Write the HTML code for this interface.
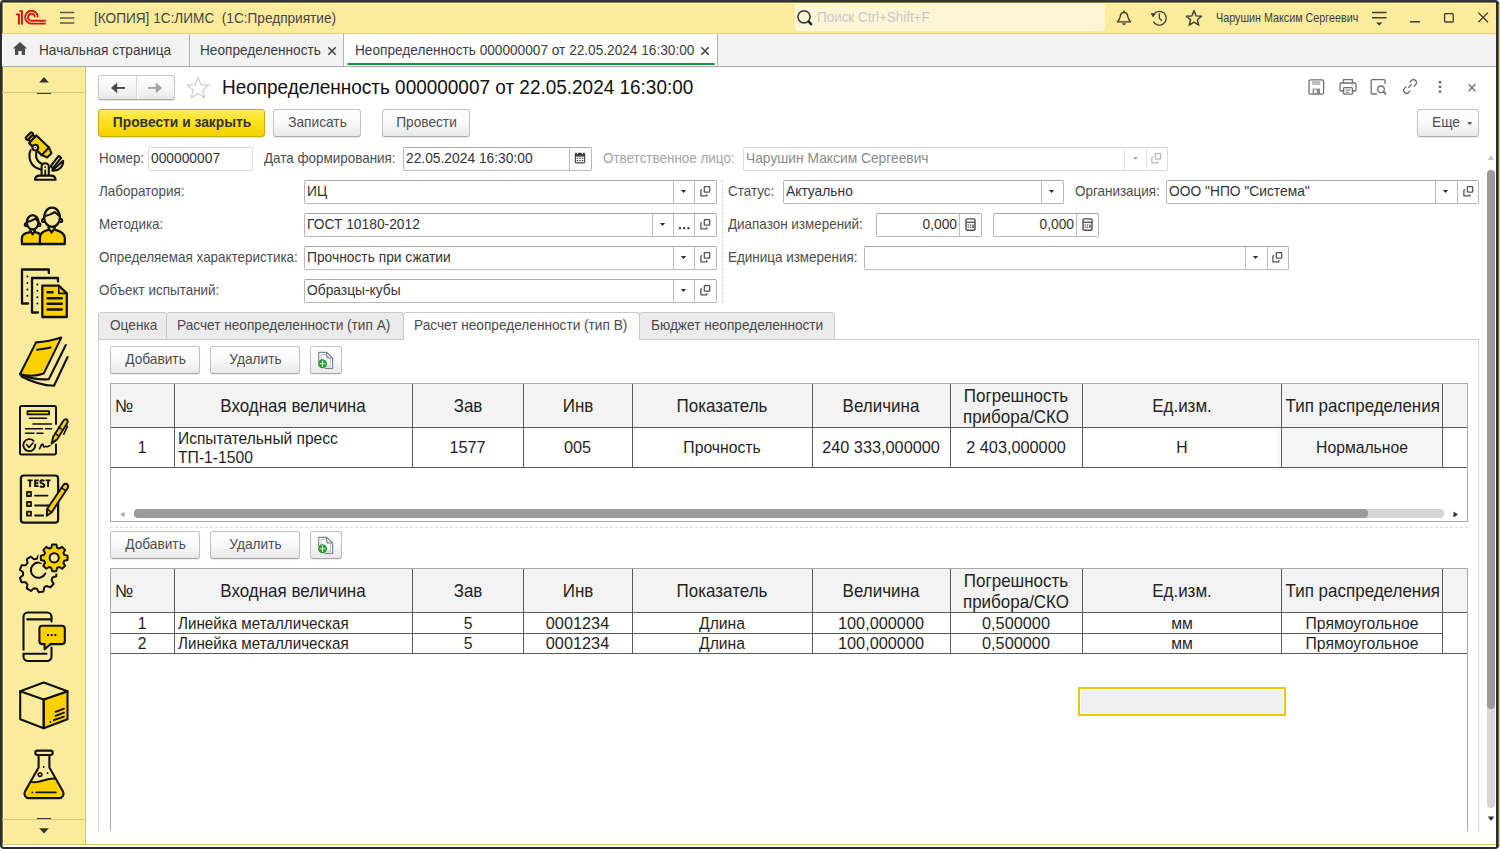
<!DOCTYPE html>
<html><head><meta charset="utf-8">
<style>
*{box-sizing:border-box;margin:0;padding:0}
html,body{width:1500px;height:849px;overflow:hidden;background:#fff;font-family:"Liberation Sans",sans-serif;color:#333}
.a{position:absolute;white-space:nowrap;line-height:normal}
svg{display:block}
</style></head><body>
<div class="a" style="left:0px;top:0px;width:1499px;height:849px;background:#2d2c2c;border-radius:4px"></div>
<div class="a" style="left:1498px;top:4px;width:1px;height:841px;background:#7a7146"></div>
<div class="a" style="left:1499px;top:3px;width:1px;height:843px;background:#DCCB7C"></div>
<div class="a" style="left:2px;top:2px;width:1494px;height:845px;background:#fff"></div>
<div class="a" style="left:2px;top:2px;width:1494px;height:31px;background:#FBEB9C"></div>
<div class="a" style="left:2px;top:0px;width:1494px;height:1px;background:#3c3a37"></div>
<div class="a" style="left:2px;top:2px;width:1494px;height:1px;background:#8a8062"></div>
<div class="a" style="left:3px;top:3px;width:1493px;height:1px;background:#FFFCA2"></div>
<div class="a" style="left:3px;top:4px;width:1493px;height:1px;background:#F8E897"></div>
<div class="a" style="left:2px;top:2px;width:1px;height:32px;background:#8a8062"></div>
<div class="a" style="left:3px;top:3px;width:1px;height:31px;background:#FFFCA2"></div>
<div class="a" style="left:2px;top:33px;width:1494px;height:1px;background:#E2D07A"></div>
<div class="a" style="left:2px;top:34px;width:1494px;height:32px;background:#F2F2F2"></div>
<div class="a" style="left:2px;top:66px;width:1494px;height:1px;background:#A9ABB2"></div>
<div class="a" style="left:2px;top:34px;width:1px;height:32px;background:#ffffff"></div>
<div class="a" style="left:2px;top:67px;width:83px;height:778px;background:#FBEB9C"></div>
<div class="a" style="left:85px;top:67px;width:1px;height:778px;background:#D3C06A"></div>
<div class="a" style="left:84px;top:67px;width:1px;height:778px;background:#FDF3A6"></div>
<div class="a" style="left:3px;top:67px;width:1px;height:778px;background:#FFFBA8"></div>
<div class="a" style="left:2px;top:67px;width:1px;height:780px;background:#6f6a52"></div>
<div class="a" style="left:2px;top:844px;width:1494px;height:1px;background:#D8C56C"></div>
<div class="a" style="left:2px;top:92px;width:83px;height:1px;background:#D8C56C"></div>
<div class="a" style="left:2px;top:819px;width:83px;height:1px;background:#D8C56C"></div>
<svg class="a" style="left:0;top:0" width="60" height="33" viewBox="0 0 60 33"><g fill="#D7141D"><path d="M15.9 13.6H19.9V24.6H17.9V15.3H15.9Z"/><path d="M19.3 10.3H22.9V24.6H20.9V12H19.3Z"/></g><g fill="none" stroke="#D7141D" stroke-width="1.9"><path d="M37.9 17.2A6.4 6.4 0 1 0 31.5 23.6H45.8"/><path d="M35.0 17.2A3.5 3.5 0 1 0 31.5 20.7H45.8"/></g></svg>
<svg class="a" style="left:58px;top:10px" width="20" height="16"><g stroke="#5E5944" stroke-width="1.6"><path d="M2 2.5H16.3M2 8H16.3M2 13H16.3"/></g></svg>
<div class="a" style="left:94px;top:10px;font-size:14.2px;color:#454545;font-weight:400;transform:scaleX(0.96);transform-origin:0 0;">[КОПИЯ] 1С:ЛИМС&nbsp;&nbsp;(1С:Предприятие)</div>
<div class="a" style="left:795px;top:4px;width:310px;height:27px;background:#FCF5D6;border-radius:3px"></div>
<svg class="a" style="left:795px;top:8px" width="20" height="20"><circle cx="9" cy="8.8" r="6.1" fill="none" stroke="#3a3a3a" stroke-width="1.6"/><path d="M13.3 13.2L16.8 16.8" stroke="#222" stroke-width="2.4"/></svg>
<div class="a" style="left:817px;top:9px;font-size:14px;color:#C9C8C8;font-weight:400;transform:scaleX(0.96);transform-origin:0 0;">Поиск Ctrl+Shift+F</div>
<svg class="a" style="left:1114px;top:8px" width="20" height="20" viewBox="0 0 20 20"><path d="M3.4 13.8C4.9 12.4 5.9 10.6 6.3 8.1C6.7 5.4 7.9 4.5 10 4.5C12.1 4.5 13.3 5.4 13.7 8.1C14.1 10.6 15.1 12.4 16.6 13.8Z" fill="none" stroke="#3f3c33" stroke-width="1.3" stroke-linejoin="round"/><path d="M10 2.4V4.5" stroke="#3f3c33" stroke-width="1.4"/><path d="M8.1 15.2A1.9 1.7 0 0 0 11.9 15.2Z" fill="#3f3c33"/></svg>
<svg class="a" style="left:1149px;top:8px" width="20" height="20" viewBox="0 0 20 20"><path d="M4.8 6.2A6.9 6.9 0 1 1 4.3 13.6" fill="none" stroke="#3f3c33" stroke-width="1.3"/><path d="M1.6 5.1L6.9 5.5L3.9 9.6Z" fill="#3f3c33"/><path d="M10.3 5.2V10.2L13 12.8" fill="none" stroke="#3f3c33" stroke-width="1.3"/></svg>
<svg class="a" style="left:1184px;top:8px" width="20" height="20" viewBox="0 0 20 20"><path d="M10 2.6L12.1 7.9L17.6 8.3L13.4 11.8L14.8 17.2L10 14.2L5.2 17.2L6.6 11.8L2.4 8.3L7.9 7.9Z" fill="none" stroke="#3f3c33" stroke-width="1.4" stroke-linejoin="round"/></svg>
<div class="a" style="left:1216px;top:11px;font-size:12.5px;color:#3d3d3d;font-weight:400;transform:scaleX(0.86);transform-origin:0 0;">Чарушин Максим Сергеевич</div>
<svg class="a" style="left:1370px;top:10px" width="20" height="18"><path d="M2 2.5H16.5M2 7.7H16.5" stroke="#3f3c33" stroke-width="1.4"/><path d="M6 12.5H12.5L9.25 15.5Z" fill="#3f3c33"/></svg>
<div class="a" style="left:1410px;top:21px;width:10px;height:1px;background:#3f3c33"></div>
<div class="a" style="left:1410px;top:22px;width:10px;height:1px;background:#9a9270"></div>
<svg class="a" style="left:1440px;top:9px" width="18" height="18"><rect x="4.6" y="4.6" width="8.6" height="8.4" rx="0.8" fill="none" stroke="#3f3c33" stroke-width="1.3"/></svg>
<svg class="a" style="left:1474px;top:8px" width="18" height="18"><path d="M4.3 4.6L14 14.2M14 4.6L4.3 14.2" stroke="#3f3c33" stroke-width="1.3"/></svg>
<svg class="a" style="left:12px;top:41px" width="16" height="15" viewBox="0 0 16 15"><path d="M8 1L15.2 7.6H13V14H9.7V10H6.3V14H3V7.6H0.8Z" fill="#4a4a4a"/></svg>
<div class="a" style="left:39px;top:42px;font-size:14.3px;color:#3c3c3c;font-weight:400;transform:scaleX(0.955);transform-origin:0 0;">Начальная страница</div>
<div class="a" style="left:189px;top:34px;width:1px;height:32px;background:#B2B2B2"></div>
<div class="a" style="left:200px;top:42px;font-size:14.3px;color:#3c3c3c;font-weight:400;transform:scaleX(0.955);transform-origin:0 0;">Неопределенность</div>
<svg class="a" style="left:326px;top:45px" width="12" height="12"><path d="M2.3 2.3L9.7 9.7M9.7 2.3L2.3 9.7" stroke="#444" stroke-width="1.6"/></svg>
<div class="a" style="left:343px;top:34px;width:1px;height:32px;background:#B2B2B2"></div>
<div class="a" style="left:344px;top:34px;width:373px;height:32px;background:#fff"></div>
<div class="a" style="left:717px;top:34px;width:1px;height:32px;background:#B2B2B2"></div>
<div class="a" style="left:347px;top:63px;width:368px;height:2px;background:#14953F;border-radius:1px"></div>
<div class="a" style="left:355px;top:42px;font-size:14.3px;color:#3c3c3c;font-weight:400;transform:scaleX(0.955);transform-origin:0 0;">Неопределенность 000000007 от 22.05.2024 16:30:00</div>
<svg class="a" style="left:699px;top:45px" width="12" height="12"><path d="M2.3 2.3L9.7 9.7M9.7 2.3L2.3 9.7" stroke="#444" stroke-width="1.6"/></svg>
<svg class="a" style="left:38px;top:76px" width="12" height="8"><path d="M1.2 6.5L6 1L10.8 6.5Z" fill="#333"/></svg>
<div class="a" style="left:37px;top:93px;width:14px;height:1px;background:#3a3a3a"></div>
<div class="a" style="left:37px;top:818px;width:14px;height:1px;background:#3a3a3a"></div>
<svg class="a" style="left:38px;top:827px" width="12" height="8"><path d="M1.2 1.2L6 6.5L10.8 1.2Z" fill="#333"/></svg>
<div class="a" style="left:98px;top:75px;width:77px;height:25px;border:1px solid #c6c6c6;border-bottom-color:#aaa;border-radius:3px;background:linear-gradient(#fff,#f6f6f6 50%,#e9e9e9);box-shadow:0 1px 1px rgba(0,0,0,.1)"></div>
<div class="a" style="left:136px;top:76px;width:1px;height:23px;background:#d6d6d6"></div>
<div class="a" style="left:137px;top:76px;width:1px;height:23px;background:#fafafa"></div>
<svg class="a" style="left:109px;top:81px" width="18" height="14"><path d="M2 6.9L8.2 1.6V12.2Z" fill="#4a4a4a"/><path d="M7 6H16V7.9H7Z" fill="#4a4a4a"/></svg>
<svg class="a" style="left:146px;top:81px" width="18" height="14"><path d="M16 6.9L9.8 1.6V12.2Z" fill="#a3a3a3"/><path d="M2 6H11V7.9H2Z" fill="#a3a3a3"/></svg>
<svg class="a" style="left:184px;top:75px" width="28" height="26" viewBox="0 0 28 26"><path d="M14 2.2L16.9 9.7L24.9 10.1L18.7 15.2L20.8 23L14 18.6L7.2 23L9.3 15.2L3.1 10.1L11.1 9.7Z" fill="none" stroke="#c7cdd4" stroke-width="1.2" stroke-linejoin="round"/></svg>
<div class="a" style="left:222px;top:76px;font-size:20px;color:#111;font-weight:400;transform:scaleX(0.948);transform-origin:0 0;">Неопределенность 000000007 от 22.05.2024 16:30:00</div>
<svg class="a" style="left:1306px;top:77px" width="20" height="20" viewBox="0 0 20 20"><rect x="3" y="2.8" width="14.6" height="14.4" rx="1.6" fill="none" stroke="#6f6f6f" stroke-width="1.3"/><rect x="6.2" y="3" width="8" height="5" fill="#bdbdbd"/><rect x="6.6" y="11.6" width="7.4" height="5.4" fill="#8a8a8a"/><rect x="8.2" y="12.6" width="2.4" height="3.6" fill="#fff"/></svg>
<svg class="a" style="left:1338px;top:77px" width="20" height="20" viewBox="0 0 20 20"><path d="M5.5 6V2.6H14.5V6" fill="none" stroke="#6f6f6f" stroke-width="1.3"/><path d="M5 14H3.2A1.2 1.2 0 0 1 2 12.8V7.2A1.2 1.2 0 0 1 3.2 6H16.8A1.2 1.2 0 0 1 18 7.2V12.8A1.2 1.2 0 0 1 16.8 14H15" fill="none" stroke="#6f6f6f" stroke-width="1.3"/><rect x="5.6" y="10.6" width="8.8" height="6.6" rx="0.8" fill="#fff" stroke="#6f6f6f" stroke-width="1.3"/><path d="M7.5 13H12.5M7.5 15.2H11" stroke="#6f6f6f" stroke-width="1"/><path d="M13.5 8.2H15.8" stroke="#aaa" stroke-width="1"/></svg>
<svg class="a" style="left:1369px;top:77px" width="20" height="20" viewBox="0 0 20 20"><path d="M8 17H3.2A1 1 0 0 1 2.2 16V3.6A1 1 0 0 1 3.2 2.6H15A1 1 0 0 1 16 3.6V7" fill="none" stroke="#6f6f6f" stroke-width="1.3"/><circle cx="12" cy="12.3" r="3.3" fill="none" stroke="#6f6f6f" stroke-width="1.3"/><path d="M14.4 14.7L17 17.3" stroke="#6f6f6f" stroke-width="1.8"/></svg>
<svg class="a" style="left:1400px;top:77px" width="20" height="20" viewBox="0 0 20 20"><path d="M8.3 10.7L11.7 7.3" stroke="#6f6f6f" stroke-width="1.3"/><path d="M9.6 5.4L11.5 3.5A2.9 2.9 0 0 1 15.6 7.6L13.7 9.5" fill="none" stroke="#6f6f6f" stroke-width="1.3"/><path d="M10.4 13.6L8.5 15.5A2.9 2.9 0 0 1 4.4 11.4L6.3 9.5" fill="none" stroke="#6f6f6f" stroke-width="1.3"/></svg>
<svg class="a" style="left:1436px;top:78px" width="8" height="18"><circle cx="4" cy="4.2" r="1.4" fill="#6f6f6f"/><circle cx="4" cy="8.9" r="1.4" fill="#6f6f6f"/><circle cx="4" cy="13.6" r="1.4" fill="#6f6f6f"/></svg>
<svg class="a" style="left:1466px;top:82px" width="12" height="12"><path d="M2.6 2.2L9.4 9.2M9.4 2.2L2.6 9.2" stroke="#6f6f6f" stroke-width="1.3"/></svg>
<div class="a" style="left:98px;top:109px;width:167px;height:28px;border:1px solid #C8AB14;border-radius:3px;background:linear-gradient(#FFEC5C 0%,#FFE11F 45%,#F4D200 100%);box-shadow:0 1px 1px rgba(0,0,0,.12)"></div>
<div class="a" style="left:101.5px;width:160px;text-align:center;top:114px;font-size:14.3px;color:#333;font-weight:700;transform:scaleX(0.965);transform-origin:50% 0;">Провести и закрыть</div>
<div class="a" style="left:273px;top:109px;width:88px;height:28px;border:1px solid #c3c3c3;border-bottom-color:#aaa;border-radius:3px;background:linear-gradient(#fff 0%,#f9f9f9 50%,#e8e8e8 100%);box-shadow:0 1px 1px rgba(0,0,0,.08);"></div>
<div class="a" style="left:273.5px;width:87px;text-align:center;top:114px;font-size:14.5px;color:#4d4d4d;font-weight:400;transform:scaleX(0.945);transform-origin:50% 0;">Записать</div>
<div class="a" style="left:382px;top:109px;width:88px;height:28px;border:1px solid #c3c3c3;border-bottom-color:#aaa;border-radius:3px;background:linear-gradient(#fff 0%,#f9f9f9 50%,#e8e8e8 100%);box-shadow:0 1px 1px rgba(0,0,0,.08);"></div>
<div class="a" style="left:382.5px;width:87px;text-align:center;top:114px;font-size:14.5px;color:#4d4d4d;font-weight:400;transform:scaleX(0.945);transform-origin:50% 0;">Провести</div>
<div class="a" style="left:1417px;top:109px;width:62px;height:28px;border:1px solid #c3c3c3;border-bottom-color:#aaa;border-radius:3px;background:linear-gradient(#fff 0%,#f9f9f9 50%,#e8e8e8 100%);box-shadow:0 1px 1px rgba(0,0,0,.08);"></div>
<div class="a" style="left:1432px;top:114px;font-size:14.5px;color:#4d4d4d;font-weight:400;transform:scaleX(0.945);transform-origin:0 0;">Еще</div>
<svg class="a" style="left:1467px;top:122px" width="6" height="4"><path d="M0.2 0.3H5.2L2.7 2.8Z" fill="#333"/></svg>
<div class="a" style="left:99px;top:150px;font-size:14.3px;color:#4d4d4d;font-weight:400;transform:scaleX(0.94);transform-origin:0 0;">Номер:</div>
<div class="a" style="left:148px;top:147px;width:105px;height:24px;border:1px solid #dadada;border-top-color:#d5d5d5;border-radius:2px;background:#fff"></div>
<div class="a" style="left:151px;top:150px;font-size:14.3px;color:#333;font-weight:400;transform:scaleX(0.965);transform-origin:0 0;">000000007</div>
<div class="a" style="left:264px;top:150px;font-size:14.3px;color:#4d4d4d;font-weight:400;transform:scaleX(0.94);transform-origin:0 0;">Дата формирования:</div>
<div class="a" style="left:403px;top:147px;width:189px;height:24px;border:1px solid #b8b8b8;border-top-color:#a8a8a8;border-radius:2px;background:#fff"></div>
<div class="a" style="left:569px;top:148px;width:1px;height:22px;background:#bdbdbd"></div>
<div class="a" style="left:406px;top:150px;font-size:14.3px;color:#333;font-weight:400;transform:scaleX(0.965);transform-origin:0 0;">22.05.2024 16:30:00</div>
<svg width="12" height="13" style="position:absolute;left:574px;top:151px" viewBox="0 0 12 13"><path d="M0.8 3.2A1.4 1.4 0 0 1 2.2 1.8H9.8A1.4 1.4 0 0 1 11.2 3.2V11A1.4 1.4 0 0 1 9.8 12.4H2.2A1.4 1.4 0 0 1 0.8 11Z" fill="#3d3d3d"/><rect x="1.9" y="5.6" width="8.2" height="5.7" fill="#fff"/><g fill="#3d3d3d"><circle cx="3.4" cy="7.2" r="0.8"/><circle cx="6" cy="7.2" r="0.8"/><circle cx="8.6" cy="7.2" r="0.8"/><circle cx="3.4" cy="9.6" r="0.8"/><circle cx="6" cy="9.6" r="0.8"/><circle cx="8.6" cy="9.6" r="0.8"/></g><rect x="2.9" y="0.6" width="1.1" height="2.6" fill="#fff"/><rect x="7.9" y="0.6" width="1.1" height="2.6" fill="#fff"/></svg>
<div class="a" style="left:603px;top:150px;font-size:14.3px;color:#a4a4a4;font-weight:400;transform:scaleX(0.94);transform-origin:0 0;">Ответственное лицо:</div>
<div class="a" style="left:743px;top:147px;width:425px;height:24px;border:1px solid #dadada;border-top-color:#d5d5d5;border-radius:2px;background:#fff"></div>
<div class="a" style="left:1124px;top:148px;width:1px;height:22px;background:#e3e3e3"></div>
<div class="a" style="left:1146px;top:148px;width:1px;height:22px;background:#e3e3e3"></div>
<div class="a" style="left:746px;top:150px;font-size:14.3px;color:#8a8a8a;font-weight:400;transform:scaleX(0.965);transform-origin:0 0;">Чарушин Максим Сергеевич</div>
<svg width="7" height="5" style="position:absolute;left:1132px;top:156px"><path d="M0.8 1H6.2L3.5 4.1z" fill="#b5b5b5"/></svg>
<svg width="13" height="13" style="position:absolute;left:1150px;top:152px" viewBox="0 0 13 13"><path d="M2.6 4.6L1.9 5.3V10.9H7.8V9.6" fill="none" stroke="#b8b8b8" stroke-width="1.3" stroke-linecap="round" stroke-linejoin="round"/><rect x="5.3" y="1.7" width="5.4" height="5.5" rx="0.6" fill="none" stroke="#b8b8b8" stroke-width="1.3"/></svg>
<div class="a" style="left:99px;top:183px;font-size:14.3px;color:#4d4d4d;font-weight:400;transform:scaleX(0.94);transform-origin:0 0;">Лаборатория:</div>
<div class="a" style="left:304px;top:180px;width:413px;height:24px;border:1px solid #b8b8b8;border-top-color:#a8a8a8;border-radius:2px;background:#fff"></div>
<div class="a" style="left:673px;top:181px;width:1px;height:22px;background:#bdbdbd"></div>
<div class="a" style="left:694px;top:181px;width:1px;height:22px;background:#bdbdbd"></div>
<div class="a" style="left:307px;top:183px;font-size:14.3px;color:#333;font-weight:400;transform:scaleX(0.965);transform-origin:0 0;">ИЦ</div>
<svg width="7" height="5" style="position:absolute;left:680px;top:189px"><path d="M0.8 1H6.2L3.5 4.1z" fill="#333"/></svg>
<svg width="13" height="13" style="position:absolute;left:699px;top:185px" viewBox="0 0 13 13"><path d="M2.6 4.6L1.9 5.3V10.9H7.8V9.6" fill="none" stroke="#555" stroke-width="1.3" stroke-linecap="round" stroke-linejoin="round"/><rect x="5.3" y="1.7" width="5.4" height="5.5" rx="0.6" fill="none" stroke="#555" stroke-width="1.3"/></svg>
<div class="a" style="left:99px;top:216px;font-size:14.3px;color:#4d4d4d;font-weight:400;transform:scaleX(0.94);transform-origin:0 0;">Методика:</div>
<div class="a" style="left:304px;top:213px;width:413px;height:24px;border:1px solid #b8b8b8;border-top-color:#a8a8a8;border-radius:2px;background:#fff"></div>
<div class="a" style="left:652px;top:214px;width:1px;height:22px;background:#bdbdbd"></div>
<div class="a" style="left:673px;top:214px;width:1px;height:22px;background:#bdbdbd"></div>
<div class="a" style="left:694px;top:214px;width:1px;height:22px;background:#bdbdbd"></div>
<div class="a" style="left:307px;top:216px;font-size:14.3px;color:#333;font-weight:400;transform:scaleX(0.965);transform-origin:0 0;">ГОСТ 10180-2012</div>
<svg width="7" height="5" style="position:absolute;left:659px;top:222px"><path d="M0.8 1H6.2L3.5 4.1z" fill="#333"/></svg>
<svg width="12" height="3" style="position:absolute;left:678px;top:227px"><g fill="#222"><rect x="1" y="0.2" width="2" height="2"/><rect x="5.2" y="0.2" width="2" height="2"/><rect x="9.4" y="0.2" width="2" height="2"/></g></svg>
<svg width="13" height="13" style="position:absolute;left:699px;top:218px" viewBox="0 0 13 13"><path d="M2.6 4.6L1.9 5.3V10.9H7.8V9.6" fill="none" stroke="#555" stroke-width="1.3" stroke-linecap="round" stroke-linejoin="round"/><rect x="5.3" y="1.7" width="5.4" height="5.5" rx="0.6" fill="none" stroke="#555" stroke-width="1.3"/></svg>
<div class="a" style="left:99px;top:249px;font-size:14.3px;color:#4d4d4d;font-weight:400;transform:scaleX(0.94);transform-origin:0 0;">Определяемая характеристика:</div>
<div class="a" style="left:304px;top:246px;width:413px;height:24px;border:1px solid #b8b8b8;border-top-color:#a8a8a8;border-radius:2px;background:#fff"></div>
<div class="a" style="left:673px;top:247px;width:1px;height:22px;background:#bdbdbd"></div>
<div class="a" style="left:694px;top:247px;width:1px;height:22px;background:#bdbdbd"></div>
<div class="a" style="left:307px;top:249px;font-size:14.3px;color:#333;font-weight:400;transform:scaleX(0.965);transform-origin:0 0;">Прочность при сжатии</div>
<svg width="7" height="5" style="position:absolute;left:680px;top:255px"><path d="M0.8 1H6.2L3.5 4.1z" fill="#333"/></svg>
<svg width="13" height="13" style="position:absolute;left:699px;top:251px" viewBox="0 0 13 13"><path d="M2.6 4.6L1.9 5.3V10.9H7.8V9.6" fill="none" stroke="#555" stroke-width="1.3" stroke-linecap="round" stroke-linejoin="round"/><rect x="5.3" y="1.7" width="5.4" height="5.5" rx="0.6" fill="none" stroke="#555" stroke-width="1.3"/></svg>
<div class="a" style="left:99px;top:282px;font-size:14.3px;color:#4d4d4d;font-weight:400;transform:scaleX(0.94);transform-origin:0 0;">Объект испытаний:</div>
<div class="a" style="left:304px;top:279px;width:413px;height:24px;border:1px solid #b8b8b8;border-top-color:#a8a8a8;border-radius:2px;background:#fff"></div>
<div class="a" style="left:673px;top:280px;width:1px;height:22px;background:#bdbdbd"></div>
<div class="a" style="left:694px;top:280px;width:1px;height:22px;background:#bdbdbd"></div>
<div class="a" style="left:307px;top:282px;font-size:14.3px;color:#333;font-weight:400;transform:scaleX(0.965);transform-origin:0 0;">Образцы-кубы</div>
<svg width="7" height="5" style="position:absolute;left:680px;top:288px"><path d="M0.8 1H6.2L3.5 4.1z" fill="#333"/></svg>
<svg width="13" height="13" style="position:absolute;left:699px;top:284px" viewBox="0 0 13 13"><path d="M2.6 4.6L1.9 5.3V10.9H7.8V9.6" fill="none" stroke="#555" stroke-width="1.3" stroke-linecap="round" stroke-linejoin="round"/><rect x="5.3" y="1.7" width="5.4" height="5.5" rx="0.6" fill="none" stroke="#555" stroke-width="1.3"/></svg>
<div class="a" style="left:722px;top:180px;width:1px;height:123px;background:repeating-linear-gradient(#d0d0d0 0 2px,transparent 2px 4px)"></div>
<div class="a" style="left:728px;top:183px;font-size:14.3px;color:#4d4d4d;font-weight:400;transform:scaleX(0.94);transform-origin:0 0;">Статус:</div>
<div class="a" style="left:783px;top:180px;width:281px;height:24px;border:1px solid #b8b8b8;border-top-color:#a8a8a8;border-radius:2px;background:#fff"></div>
<div class="a" style="left:1041px;top:181px;width:1px;height:22px;background:#bdbdbd"></div>
<div class="a" style="left:786px;top:183px;font-size:14.3px;color:#333;font-weight:400;transform:scaleX(0.965);transform-origin:0 0;">Актуально</div>
<svg width="7" height="5" style="position:absolute;left:1048px;top:189px"><path d="M0.8 1H6.2L3.5 4.1z" fill="#333"/></svg>
<div class="a" style="left:1075px;top:183px;font-size:14.3px;color:#4d4d4d;font-weight:400;transform:scaleX(0.94);transform-origin:0 0;">Организация:</div>
<div class="a" style="left:1166px;top:180px;width:313px;height:24px;border:1px solid #b8b8b8;border-top-color:#a8a8a8;border-radius:2px;background:#fff"></div>
<div class="a" style="left:1435px;top:181px;width:1px;height:22px;background:#bdbdbd"></div>
<div class="a" style="left:1457px;top:181px;width:1px;height:22px;background:#bdbdbd"></div>
<div class="a" style="left:1169px;top:183px;font-size:14.3px;color:#333;font-weight:400;transform:scaleX(0.965);transform-origin:0 0;">ООО "НПО "Система"</div>
<svg width="7" height="5" style="position:absolute;left:1442px;top:189px"><path d="M0.8 1H6.2L3.5 4.1z" fill="#333"/></svg>
<svg width="13" height="13" style="position:absolute;left:1462px;top:185px" viewBox="0 0 13 13"><path d="M2.6 4.6L1.9 5.3V10.9H7.8V9.6" fill="none" stroke="#555" stroke-width="1.3" stroke-linecap="round" stroke-linejoin="round"/><rect x="5.3" y="1.7" width="5.4" height="5.5" rx="0.6" fill="none" stroke="#555" stroke-width="1.3"/></svg>
<div class="a" style="left:728px;top:216px;font-size:14.3px;color:#4d4d4d;font-weight:400;transform:scaleX(0.94);transform-origin:0 0;">Диапазон измерений:</div>
<div class="a" style="left:876px;top:213px;width:106px;height:24px;border:1px solid #b8b8b8;border-top-color:#a8a8a8;border-radius:2px;background:#fff"></div>
<div class="a" style="left:959px;top:214px;width:1px;height:22px;background:#bdbdbd"></div>
<div class="a" style="left:157px;width:800px;text-align:right;top:216px;font-size:14.3px;color:#333;font-weight:400;transform:scaleX(0.965);transform-origin:100% 0;">0,000</div>
<svg width="11" height="13" style="position:absolute;left:965px;top:218px" viewBox="0 0 11 13"><rect x="1" y="0.9" width="9" height="11.3" rx="1.3" fill="none" stroke="#4a4a4a" stroke-width="1.4"/><rect x="1.2" y="3.6" width="8.6" height="1.3" fill="#4a4a4a"/><g fill="#4a4a4a"><circle cx="3.2" cy="6.9" r="0.75"/><circle cx="5.6" cy="6.9" r="0.75"/><circle cx="3.2" cy="9.3" r="0.75"/><circle cx="5.6" cy="9.3" r="0.75"/><rect x="7.3" y="6.2" width="1.4" height="4" rx="0.7"/></g></svg>
<div class="a" style="left:993px;top:213px;width:106px;height:24px;border:1px solid #b8b8b8;border-top-color:#a8a8a8;border-radius:2px;background:#fff"></div>
<div class="a" style="left:1076px;top:214px;width:1px;height:22px;background:#bdbdbd"></div>
<div class="a" style="left:274px;width:800px;text-align:right;top:216px;font-size:14.3px;color:#333;font-weight:400;transform:scaleX(0.965);transform-origin:100% 0;">0,000</div>
<svg width="11" height="13" style="position:absolute;left:1082px;top:218px" viewBox="0 0 11 13"><rect x="1" y="0.9" width="9" height="11.3" rx="1.3" fill="none" stroke="#4a4a4a" stroke-width="1.4"/><rect x="1.2" y="3.6" width="8.6" height="1.3" fill="#4a4a4a"/><g fill="#4a4a4a"><circle cx="3.2" cy="6.9" r="0.75"/><circle cx="5.6" cy="6.9" r="0.75"/><circle cx="3.2" cy="9.3" r="0.75"/><circle cx="5.6" cy="9.3" r="0.75"/><rect x="7.3" y="6.2" width="1.4" height="4" rx="0.7"/></g></svg>
<div class="a" style="left:728px;top:249px;font-size:14.3px;color:#4d4d4d;font-weight:400;transform:scaleX(0.94);transform-origin:0 0;">Единица измерения:</div>
<div class="a" style="left:864px;top:246px;width:425px;height:24px;border:1px solid #b8b8b8;border-top-color:#a8a8a8;border-radius:2px;background:#fff"></div>
<div class="a" style="left:1245px;top:247px;width:1px;height:22px;background:#bdbdbd"></div>
<div class="a" style="left:1267px;top:247px;width:1px;height:22px;background:#bdbdbd"></div>
<svg width="7" height="5" style="position:absolute;left:1252px;top:255px"><path d="M0.8 1H6.2L3.5 4.1z" fill="#333"/></svg>
<svg width="13" height="13" style="position:absolute;left:1271px;top:251px" viewBox="0 0 13 13"><path d="M2.6 4.6L1.9 5.3V10.9H7.8V9.6" fill="none" stroke="#555" stroke-width="1.3" stroke-linecap="round" stroke-linejoin="round"/><rect x="5.3" y="1.7" width="5.4" height="5.5" rx="0.6" fill="none" stroke="#555" stroke-width="1.3"/></svg>
<div class="a" style="left:98px;top:339px;width:1381px;height:1px;background:#c9c9c9"></div>
<div class="a" style="left:98px;top:312px;width:69px;height:28px;background:#EBEBEB;border:1px solid #c9c9c9;border-radius:3px 3px 0 0"></div>
<div class="a" style="left:110px;top:317px;font-size:14.3px;color:#4a4a4a;font-weight:400;transform:scaleX(0.955);transform-origin:0 0;">Оценка</div>
<div class="a" style="left:166px;top:312px;width:238px;height:28px;background:#EBEBEB;border:1px solid #c9c9c9;border-radius:3px 3px 0 0"></div>
<div class="a" style="left:177px;top:317px;font-size:14.3px;color:#4a4a4a;font-weight:400;transform:scaleX(0.955);transform-origin:0 0;">Расчет неопределенности (тип А)</div>
<div class="a" style="left:639px;top:312px;width:196px;height:28px;background:#EBEBEB;border:1px solid #c9c9c9;border-radius:3px 3px 0 0"></div>
<div class="a" style="left:651px;top:317px;font-size:14.3px;color:#4a4a4a;font-weight:400;transform:scaleX(0.955);transform-origin:0 0;">Бюджет неопределенности</div>
<div class="a" style="left:403px;top:312px;width:237px;height:28px;background:#fff;border:1px solid #c9c9c9;border-bottom:none;border-radius:3px 3px 0 0"></div>
<div class="a" style="left:414px;top:317px;font-size:14.3px;color:#4a4a4a;font-weight:400;transform:scaleX(0.955);transform-origin:0 0;">Расчет неопределенности (тип В)</div>
<div class="a" style="left:98px;top:339px;width:1px;height:492px;background:#d2d2d2"></div>
<div class="a" style="left:1478px;top:339px;width:1px;height:492px;background:#d2d2d2"></div>
<div class="a" style="left:110px;top:346px;width:90px;height:28px;border:1px solid #c3c3c3;border-bottom-color:#aaa;border-radius:3px;background:linear-gradient(#fff 0%,#f9f9f9 50%,#e8e8e8 100%);box-shadow:0 1px 1px rgba(0,0,0,.08);"></div>
<div class="a" style="left:110.5px;width:89px;text-align:center;top:351px;font-size:14.5px;color:#4d4d4d;font-weight:400;transform:scaleX(0.945);transform-origin:50% 0;">Добавить</div>
<div class="a" style="left:210px;top:346px;width:90px;height:28px;border:1px solid #c3c3c3;border-bottom-color:#aaa;border-radius:3px;background:linear-gradient(#fff 0%,#f9f9f9 50%,#e8e8e8 100%);box-shadow:0 1px 1px rgba(0,0,0,.08);"></div>
<div class="a" style="left:210.5px;width:89px;text-align:center;top:351px;font-size:14.5px;color:#4d4d4d;font-weight:400;transform:scaleX(0.945);transform-origin:50% 0;">Удалить</div>
<div class="a" style="left:310px;top:346px;width:32px;height:28px;border:1px solid #c3c3c3;border-bottom-color:#aaa;border-radius:3px;background:linear-gradient(#fff 0%,#f9f9f9 50%,#e8e8e8 100%);box-shadow:0 1px 1px rgba(0,0,0,.08);"></div>
<svg class="a" style="left:315px;top:350px" width="22" height="22" viewBox="0 0 22 22"><path d="M3.7 11V2.3H11.6L17.6 8.2V18.3H9.5" fill="#fff" stroke="#7d8896" stroke-width="1.2" stroke-linejoin="round"/><path d="M6.2 10V4.6H11L15.4 8.8V16.2H10" fill="none" stroke="#aab3be" stroke-width="0.9"/><path d="M11.6 2.3V6A2 2 0 0 0 13.6 8H17.6" fill="none" stroke="#7d8896" stroke-width="1.1"/><circle cx="7.5" cy="13.8" r="4.5" fill="#23A035"/><path d="M7.5 10.6V17M4.6 13.8H10.4" stroke="#dff3df" stroke-width="1.1"/></svg>
<div class="a" style="left:110px;top:383px;width:1358px;height:45px;background:#F3F3F3"></div>
<div class="a" style="left:110px;top:383px;width:1358px;height:1px;background:#a9a9a9"></div>
<div class="a" style="left:110px;top:427px;width:1358px;height:1px;background:#5a5a5a"></div>
<div class="a" style="left:174px;top:384px;width:1px;height:44px;background:#5a5a5a"></div>
<div class="a" style="left:412px;top:384px;width:1px;height:44px;background:#5a5a5a"></div>
<div class="a" style="left:523px;top:384px;width:1px;height:44px;background:#5a5a5a"></div>
<div class="a" style="left:632px;top:384px;width:1px;height:44px;background:#5a5a5a"></div>
<div class="a" style="left:812px;top:384px;width:1px;height:44px;background:#5a5a5a"></div>
<div class="a" style="left:950px;top:384px;width:1px;height:44px;background:#5a5a5a"></div>
<div class="a" style="left:1082px;top:384px;width:1px;height:44px;background:#5a5a5a"></div>
<div class="a" style="left:1281px;top:384px;width:1px;height:44px;background:#5a5a5a"></div>
<div class="a" style="left:1442px;top:384px;width:1px;height:44px;background:#5a5a5a"></div>
<div class="a" style="left:110px;top:383px;width:1px;height:45px;background:#a9a9a9"></div>
<div class="a" style="left:1467px;top:383px;width:1px;height:45px;background:#a9a9a9"></div>
<div class="a" style="left:115px;top:396px;font-size:17.8px;color:#242424;font-weight:400;transform:scaleX(0.955);transform-origin:0 0;">№</div>
<div class="a" style="left:175.0px;width:236px;text-align:center;top:396px;font-size:17.8px;color:#242424;font-weight:400;transform:scaleX(0.955);transform-origin:50% 0;">Входная величина</div>
<div class="a" style="left:412.5px;width:110px;text-align:center;top:396px;font-size:17.8px;color:#242424;font-weight:400;transform:scaleX(0.955);transform-origin:50% 0;">Зав</div>
<div class="a" style="left:523.5px;width:108px;text-align:center;top:396px;font-size:17.8px;color:#242424;font-weight:400;transform:scaleX(0.955);transform-origin:50% 0;">Инв</div>
<div class="a" style="left:633.0px;width:178px;text-align:center;top:396px;font-size:17.8px;color:#242424;font-weight:400;transform:scaleX(0.955);transform-origin:50% 0;">Показатель</div>
<div class="a" style="left:813.0px;width:136px;text-align:center;top:396px;font-size:17.8px;color:#242424;font-weight:400;transform:scaleX(0.955);transform-origin:50% 0;">Величина</div>
<div class="a" style="left:951.0px;width:130px;text-align:center;top:386px;font-size:17.8px;color:#242424;font-weight:400;transform:scaleX(0.955);transform-origin:50% 0;">Погрешность</div>
<div class="a" style="left:951.0px;width:130px;text-align:center;top:407px;font-size:17.8px;color:#242424;font-weight:400;transform:scaleX(0.955);transform-origin:50% 0;">прибора/СКО</div>
<div class="a" style="left:1082.5px;width:198px;text-align:center;top:396px;font-size:17.8px;color:#242424;font-weight:400;transform:scaleX(0.955);transform-origin:50% 0;">Ед.изм.</div>
<div class="a" style="left:1281.5px;width:160px;text-align:center;top:396px;font-size:17.8px;color:#242424;font-weight:400;transform:scaleX(0.955);transform-origin:50% 0;">Тип распределения</div>
<div class="a" style="left:1277px;top:428px;width:170px;height:43px;background:#F9F9F9"></div>
<div class="a" style="left:1281px;top:428px;width:162px;height:40px;background:#F6F6F6"></div>
<div class="a" style="left:110px;top:467px;width:1358px;height:1px;background:#5a5a5a"></div>
<div class="a" style="left:174px;top:428px;width:1px;height:40px;background:#5a5a5a"></div>
<div class="a" style="left:412px;top:428px;width:1px;height:40px;background:#5a5a5a"></div>
<div class="a" style="left:523px;top:428px;width:1px;height:40px;background:#5a5a5a"></div>
<div class="a" style="left:632px;top:428px;width:1px;height:40px;background:#5a5a5a"></div>
<div class="a" style="left:812px;top:428px;width:1px;height:40px;background:#5a5a5a"></div>
<div class="a" style="left:950px;top:428px;width:1px;height:40px;background:#5a5a5a"></div>
<div class="a" style="left:1082px;top:428px;width:1px;height:40px;background:#5a5a5a"></div>
<div class="a" style="left:1281px;top:428px;width:1px;height:40px;background:#5a5a5a"></div>
<div class="a" style="left:1442px;top:428px;width:1px;height:40px;background:#5a5a5a"></div>
<div class="a" style="left:110px;top:383px;width:1px;height:139px;background:#a9a9a9"></div>
<div class="a" style="left:1467px;top:383px;width:1px;height:139px;background:#a9a9a9"></div>
<div class="a" style="left:110px;top:521px;width:1358px;height:1px;background:#a9a9a9"></div>
<div class="a" style="left:112.0px;width:60px;text-align:center;top:438px;font-size:16.3px;color:#1f1f1f;font-weight:400;transform:scaleX(0.965);transform-origin:50% 0;">1</div>
<div class="a" style="left:178px;top:429px;font-size:16.3px;color:#1f1f1f;font-weight:400;transform:scaleX(0.953);transform-origin:0 0;">Испытательный пресс</div>
<div class="a" style="left:178px;top:448px;font-size:16.3px;color:#1f1f1f;font-weight:400;transform:scaleX(0.965);transform-origin:0 0;">ТП-1-1500</div>
<div class="a" style="left:413.5px;width:108px;text-align:center;top:438px;font-size:16.3px;color:#1f1f1f;font-weight:400;transform:scaleX(1.0);transform-origin:50% 0;">1577</div>
<div class="a" style="left:524.5px;width:106px;text-align:center;top:438px;font-size:16.3px;color:#1f1f1f;font-weight:400;transform:scaleX(1.0);transform-origin:50% 0;">005</div>
<div class="a" style="left:634.0px;width:176px;text-align:center;top:438px;font-size:16.3px;color:#1f1f1f;font-weight:400;transform:scaleX(0.965);transform-origin:50% 0;">Прочность</div>
<div class="a" style="left:813.0px;width:136px;text-align:center;top:438px;font-size:16.3px;color:#1f1f1f;font-weight:400;transform:scaleX(1.0);transform-origin:50% 0;">240 333,000000</div>
<div class="a" style="left:951.0px;width:130px;text-align:center;top:438px;font-size:16.3px;color:#1f1f1f;font-weight:400;transform:scaleX(1.0);transform-origin:50% 0;">2 403,000000</div>
<div class="a" style="left:1083.5px;width:196px;text-align:center;top:438px;font-size:16.3px;color:#1f1f1f;font-weight:400;transform:scaleX(0.965);transform-origin:50% 0;">Н</div>
<div class="a" style="left:1282.5px;width:158px;text-align:center;top:438px;font-size:16.3px;color:#1f1f1f;font-weight:400;transform:scaleX(0.965);transform-origin:50% 0;">Нормальное</div>
<div class="a" style="left:134px;top:509px;width:1310px;height:9px;background:#D5D5D5;border-radius:4px"></div>
<div class="a" style="left:134px;top:509px;width:1234px;height:9px;background:#9B9B9B;border-radius:4px"></div>
<svg class="a" style="left:119px;top:511px" width="7" height="7"><path d="M5.5 0.8V6.2L1.2 3.5Z" fill="#aaa"/></svg>
<svg class="a" style="left:1452px;top:511px" width="7" height="7"><path d="M1.5 0.5V6.5L6 3.5Z" fill="#333"/></svg>
<div class="a" style="left:110px;top:527px;width:1358px;height:1px;background:repeating-linear-gradient(90deg,#dcdcdc 0 3px,transparent 3px 5px)"></div>
<div class="a" style="left:110px;top:531px;width:90px;height:28px;border:1px solid #c3c3c3;border-bottom-color:#aaa;border-radius:3px;background:linear-gradient(#fff 0%,#f9f9f9 50%,#e8e8e8 100%);box-shadow:0 1px 1px rgba(0,0,0,.08);"></div>
<div class="a" style="left:110.5px;width:89px;text-align:center;top:536px;font-size:14.5px;color:#4d4d4d;font-weight:400;transform:scaleX(0.945);transform-origin:50% 0;">Добавить</div>
<div class="a" style="left:210px;top:531px;width:90px;height:28px;border:1px solid #c3c3c3;border-bottom-color:#aaa;border-radius:3px;background:linear-gradient(#fff 0%,#f9f9f9 50%,#e8e8e8 100%);box-shadow:0 1px 1px rgba(0,0,0,.08);"></div>
<div class="a" style="left:210.5px;width:89px;text-align:center;top:536px;font-size:14.5px;color:#4d4d4d;font-weight:400;transform:scaleX(0.945);transform-origin:50% 0;">Удалить</div>
<div class="a" style="left:310px;top:531px;width:32px;height:28px;border:1px solid #c3c3c3;border-bottom-color:#aaa;border-radius:3px;background:linear-gradient(#fff 0%,#f9f9f9 50%,#e8e8e8 100%);box-shadow:0 1px 1px rgba(0,0,0,.08);"></div>
<svg class="a" style="left:315px;top:535px" width="22" height="22" viewBox="0 0 22 22"><path d="M3.7 11V2.3H11.6L17.6 8.2V18.3H9.5" fill="#fff" stroke="#7d8896" stroke-width="1.2" stroke-linejoin="round"/><path d="M6.2 10V4.6H11L15.4 8.8V16.2H10" fill="none" stroke="#aab3be" stroke-width="0.9"/><path d="M11.6 2.3V6A2 2 0 0 0 13.6 8H17.6" fill="none" stroke="#7d8896" stroke-width="1.1"/><circle cx="7.5" cy="13.8" r="4.5" fill="#23A035"/><path d="M7.5 10.6V17M4.6 13.8H10.4" stroke="#dff3df" stroke-width="1.1"/></svg>
<div class="a" style="left:110px;top:568px;width:1358px;height:45px;background:#F3F3F3"></div>
<div class="a" style="left:110px;top:568px;width:1358px;height:1px;background:#a9a9a9"></div>
<div class="a" style="left:110px;top:612px;width:1358px;height:1px;background:#5a5a5a"></div>
<div class="a" style="left:174px;top:569px;width:1px;height:44px;background:#5a5a5a"></div>
<div class="a" style="left:412px;top:569px;width:1px;height:44px;background:#5a5a5a"></div>
<div class="a" style="left:523px;top:569px;width:1px;height:44px;background:#5a5a5a"></div>
<div class="a" style="left:632px;top:569px;width:1px;height:44px;background:#5a5a5a"></div>
<div class="a" style="left:812px;top:569px;width:1px;height:44px;background:#5a5a5a"></div>
<div class="a" style="left:950px;top:569px;width:1px;height:44px;background:#5a5a5a"></div>
<div class="a" style="left:1082px;top:569px;width:1px;height:44px;background:#5a5a5a"></div>
<div class="a" style="left:1281px;top:569px;width:1px;height:44px;background:#5a5a5a"></div>
<div class="a" style="left:1442px;top:569px;width:1px;height:44px;background:#5a5a5a"></div>
<div class="a" style="left:110px;top:568px;width:1px;height:45px;background:#a9a9a9"></div>
<div class="a" style="left:1467px;top:568px;width:1px;height:45px;background:#a9a9a9"></div>
<div class="a" style="left:115px;top:581px;font-size:17.8px;color:#242424;font-weight:400;transform:scaleX(0.955);transform-origin:0 0;">№</div>
<div class="a" style="left:175.0px;width:236px;text-align:center;top:581px;font-size:17.8px;color:#242424;font-weight:400;transform:scaleX(0.955);transform-origin:50% 0;">Входная величина</div>
<div class="a" style="left:412.5px;width:110px;text-align:center;top:581px;font-size:17.8px;color:#242424;font-weight:400;transform:scaleX(0.955);transform-origin:50% 0;">Зав</div>
<div class="a" style="left:523.5px;width:108px;text-align:center;top:581px;font-size:17.8px;color:#242424;font-weight:400;transform:scaleX(0.955);transform-origin:50% 0;">Инв</div>
<div class="a" style="left:633.0px;width:178px;text-align:center;top:581px;font-size:17.8px;color:#242424;font-weight:400;transform:scaleX(0.955);transform-origin:50% 0;">Показатель</div>
<div class="a" style="left:813.0px;width:136px;text-align:center;top:581px;font-size:17.8px;color:#242424;font-weight:400;transform:scaleX(0.955);transform-origin:50% 0;">Величина</div>
<div class="a" style="left:951.0px;width:130px;text-align:center;top:571px;font-size:17.8px;color:#242424;font-weight:400;transform:scaleX(0.955);transform-origin:50% 0;">Погрешность</div>
<div class="a" style="left:951.0px;width:130px;text-align:center;top:592px;font-size:17.8px;color:#242424;font-weight:400;transform:scaleX(0.955);transform-origin:50% 0;">прибора/СКО</div>
<div class="a" style="left:1082.5px;width:198px;text-align:center;top:581px;font-size:17.8px;color:#242424;font-weight:400;transform:scaleX(0.955);transform-origin:50% 0;">Ед.изм.</div>
<div class="a" style="left:1281.5px;width:160px;text-align:center;top:581px;font-size:17.8px;color:#242424;font-weight:400;transform:scaleX(0.955);transform-origin:50% 0;">Тип распределения</div>
<div class="a" style="left:110px;top:633px;width:1333px;height:1px;background:#5a5a5a"></div>
<div class="a" style="left:110px;top:653px;width:1358px;height:1px;background:#5a5a5a"></div>
<div class="a" style="left:174px;top:613px;width:1px;height:41px;background:#5a5a5a"></div>
<div class="a" style="left:412px;top:613px;width:1px;height:41px;background:#5a5a5a"></div>
<div class="a" style="left:523px;top:613px;width:1px;height:41px;background:#5a5a5a"></div>
<div class="a" style="left:632px;top:613px;width:1px;height:41px;background:#5a5a5a"></div>
<div class="a" style="left:812px;top:613px;width:1px;height:41px;background:#5a5a5a"></div>
<div class="a" style="left:950px;top:613px;width:1px;height:41px;background:#5a5a5a"></div>
<div class="a" style="left:1082px;top:613px;width:1px;height:41px;background:#5a5a5a"></div>
<div class="a" style="left:1281px;top:613px;width:1px;height:41px;background:#5a5a5a"></div>
<div class="a" style="left:1442px;top:613px;width:1px;height:41px;background:#5a5a5a"></div>
<div class="a" style="left:110px;top:568px;width:1px;height:263px;background:#a9a9a9"></div>
<div class="a" style="left:1467px;top:568px;width:1px;height:263px;background:#a9a9a9"></div>
<div class="a" style="left:112.0px;width:60px;text-align:center;top:614px;font-size:16.3px;color:#1f1f1f;font-weight:400;transform:scaleX(0.965);transform-origin:50% 0;">1</div>
<div class="a" style="left:178px;top:614px;font-size:16.3px;color:#1f1f1f;font-weight:400;transform:scaleX(0.932);transform-origin:0 0;">Линейка металлическая</div>
<div class="a" style="left:413.5px;width:108px;text-align:center;top:614px;font-size:16.3px;color:#1f1f1f;font-weight:400;transform:scaleX(0.965);transform-origin:50% 0;">5</div>
<div class="a" style="left:524.5px;width:106px;text-align:center;top:614px;font-size:16.3px;color:#1f1f1f;font-weight:400;transform:scaleX(1.0);transform-origin:50% 0;">0001234</div>
<div class="a" style="left:634.0px;width:176px;text-align:center;top:614px;font-size:16.3px;color:#1f1f1f;font-weight:400;transform:scaleX(0.965);transform-origin:50% 0;">Длина</div>
<div class="a" style="left:813.0px;width:136px;text-align:center;top:614px;font-size:16.3px;color:#1f1f1f;font-weight:400;transform:scaleX(1.0);transform-origin:50% 0;">100,000000</div>
<div class="a" style="left:951.0px;width:130px;text-align:center;top:614px;font-size:16.3px;color:#1f1f1f;font-weight:400;transform:scaleX(1.0);transform-origin:50% 0;">0,500000</div>
<div class="a" style="left:1083.5px;width:196px;text-align:center;top:614px;font-size:16.3px;color:#1f1f1f;font-weight:400;transform:scaleX(0.965);transform-origin:50% 0;">мм</div>
<div class="a" style="left:1282.5px;width:158px;text-align:center;top:614px;font-size:16.3px;color:#1f1f1f;font-weight:400;transform:scaleX(0.965);transform-origin:50% 0;">Прямоугольное</div>
<div class="a" style="left:112.0px;width:60px;text-align:center;top:634px;font-size:16.3px;color:#1f1f1f;font-weight:400;transform:scaleX(0.965);transform-origin:50% 0;">2</div>
<div class="a" style="left:178px;top:634px;font-size:16.3px;color:#1f1f1f;font-weight:400;transform:scaleX(0.932);transform-origin:0 0;">Линейка металлическая</div>
<div class="a" style="left:413.5px;width:108px;text-align:center;top:634px;font-size:16.3px;color:#1f1f1f;font-weight:400;transform:scaleX(0.965);transform-origin:50% 0;">5</div>
<div class="a" style="left:524.5px;width:106px;text-align:center;top:634px;font-size:16.3px;color:#1f1f1f;font-weight:400;transform:scaleX(1.0);transform-origin:50% 0;">0001234</div>
<div class="a" style="left:634.0px;width:176px;text-align:center;top:634px;font-size:16.3px;color:#1f1f1f;font-weight:400;transform:scaleX(0.965);transform-origin:50% 0;">Длина</div>
<div class="a" style="left:813.0px;width:136px;text-align:center;top:634px;font-size:16.3px;color:#1f1f1f;font-weight:400;transform:scaleX(1.0);transform-origin:50% 0;">100,000000</div>
<div class="a" style="left:951.0px;width:130px;text-align:center;top:634px;font-size:16.3px;color:#1f1f1f;font-weight:400;transform:scaleX(1.0);transform-origin:50% 0;">0,500000</div>
<div class="a" style="left:1083.5px;width:196px;text-align:center;top:634px;font-size:16.3px;color:#1f1f1f;font-weight:400;transform:scaleX(0.965);transform-origin:50% 0;">мм</div>
<div class="a" style="left:1282.5px;width:158px;text-align:center;top:634px;font-size:16.3px;color:#1f1f1f;font-weight:400;transform:scaleX(0.965);transform-origin:50% 0;">Прямоугольное</div>
<div class="a" style="left:1078px;top:687px;width:208px;height:29px;background:#F0F0F0;border:2px solid #F7C500;box-shadow:inset 0 0 0 1px #fff"></div>
<svg class="a" style="left:1487px;top:154px" width="8" height="7"><path d="M0.8 6H7.2L4 1.5Z" fill="#c4c4c4"/></svg>
<div class="a" style="left:1487px;top:170px;width:8px;height:638px;background:#D6D6D6;border-radius:4px"></div>
<div class="a" style="left:1487px;top:170px;width:8px;height:539px;background:#9B9B9B;border-radius:4px"></div>
<svg class="a" style="left:1487px;top:815px" width="8" height="7"><path d="M0.8 1.5H7.2L4 6Z" fill="#333"/></svg>
<svg class="a" style="left:0;top:0" width="86" height="849" viewBox="0 0 86 849"><g stroke="#111" stroke-width="2.1" stroke-linejoin="round" stroke-linecap="round">
<path d="M30.6 150.2C28.2 156 28.8 166.5 40.8 169.6" fill="none"/>
<path d="M36.2 152.6C35.4 158 37.2 162 42.2 163.9" fill="none"/>
<g transform="translate(27.6 134.4) rotate(43.6)">
<rect x="0.9" y="-4.4" width="3.2" height="8.8" rx="1.2" fill="#FFD000"/>
<rect x="4.1" y="-3.3" width="3" height="6.6" fill="#FFD000"/>
<path d="M7.1 -5.3H24.5L30.2 -2.8V3L24.5 5.3H7.1Z" fill="#FFD000"/>
<path d="M24.5 -5.3V5.3" fill="none"/>
</g>
<circle cx="35.3" cy="147.6" r="2.9" fill="#FBEB9C"/>
<circle cx="35.3" cy="147.6" r="0.6" fill="#111" stroke="none"/>
<path d="M41.6 175V166.8A3.6 3.6 0 0 1 48.8 166.8V175" fill="#FBEB9C"/>
<circle cx="45.2" cy="167.2" r="0.9" fill="#111" stroke="none"/>
<path d="M45.2 170.5V174.5" stroke-width="1.8"/>
<path d="M34.9 179.8Q35.2 175.7 39.8 175.6H50.8Q55.4 175.7 55.6 179.8Z" fill="#FBEB9C"/>
<path d="M50.5 166.3L58.7 155.8L61.2 157.9L52.6 168.3Z" fill="#FBEB9C"/>
<path d="M52.2 170.5L63.1 160.9C63.6 166.5 58.6 171.4 52.2 170.5Z" fill="#FBEB9C"/>
</g><g stroke="#111" stroke-width="2.3" stroke-linejoin="round" stroke-linecap="round">
<path d="M21.9 244V238.5C21.9 235.5 24 233.7 27 232.9L32.6 231.6L37 232.6C38.5 233 39.6 233.8 40.4 234.6V244Z" fill="#FFD000"/>
<path d="M30.2 230.2L32.6 234.4L35 230.2" fill="#FBEB9C" stroke-width="2"/>
<circle cx="26.2" cy="224.8" r="1.5" fill="#FBEB9C" stroke-width="1.9"/>
<circle cx="39.1" cy="224.8" r="1.5" fill="#FBEB9C" stroke-width="1.9"/>
<ellipse cx="32.65" cy="222.3" rx="5.85" ry="7.2" fill="#FBEB9C"/>
<path d="M27 222C29.5 221.5 32.5 220.5 35.3 218.6C36.5 219.8 37.5 221 38.4 222" fill="none" stroke-width="2.1"/>
<path d="M39.9 244V238C39.9 234 42.5 231.5 46.5 230.3L51.6 229L57 230.3C61.8 231.8 64.6 234 64.8 238V244Z" fill="#FFD000"/>
<path d="M48.3 227.6L51.6 232.6L54.9 227.6" fill="#FBEB9C" stroke-width="2"/>
<circle cx="43.7" cy="220.4" r="1.7" fill="#FBEB9C" stroke-width="2"/>
<circle cx="60.5" cy="220.4" r="1.7" fill="#FBEB9C" stroke-width="2"/>
<ellipse cx="52.05" cy="217.2" rx="7.9" ry="9.6" fill="#FBEB9C"/>
<path d="M44.4 216.2C47.5 215.6 51.5 214.5 54.8 212.2C56.5 213.7 58.2 215 59.8 216.2" fill="none" stroke-width="2.2"/>
</g><g stroke="#111" stroke-width="2.3" stroke-linejoin="round" stroke-linecap="round" fill="none">
<path d="M28 303.5H22V269.5H48.8V273"/>
<path d="M38 312.5H32V278H58V281.5"/>
<g stroke="none" fill="#111"><circle cx="27.4" cy="276.6" r="1"/><circle cx="27.4" cy="283" r="1"/><circle cx="27.4" cy="289.4" r="1"/><circle cx="27.4" cy="295.8" r="1"/>
<circle cx="37.4" cy="284.4" r="1"/><circle cx="37.4" cy="290.8" r="1"/><circle cx="37.4" cy="297.2" r="1"/><circle cx="37.4" cy="303.6" r="1"/></g>
<path d="M42.3 285.6H58.8L66.8 293.4V317H42.3Z" fill="#FFD000"/>
<path d="M58.8 285.6V293.4H66.8" fill="none" stroke-width="1.6"/>
<path d="M47.5 292.2H52.5M47.5 298.2H61.8M47.5 303.8H61.8M47.5 309.5H61.8" stroke-width="2.4"/>
</g><g stroke="#111" stroke-width="2.1" stroke-linejoin="round" stroke-linecap="round">
<path d="M20 374.3L36 342.4C44 342 53 340.5 61.3 337.6L43.7 373.6C36 376.5 28 376.3 20 374.3Z" fill="#FFD000"/>
<path d="M37.2 349.8C41.5 349.3 46 348.6 50.5 347.6" fill="none" stroke-width="2"/>
<path d="M20 374.3C30 378.5 40 380 48.8 379.2L65.8 345" fill="none"/>
<path d="M21.5 376.5C33 382.5 44 385.5 54 385.8L67.6 357" fill="none"/>
</g><g stroke="#111" stroke-width="2" stroke-linejoin="round" stroke-linecap="round" fill="none">
<path d="M56 424V407.5A1.5 1.5 0 0 0 54.5 406H21.5A1.5 1.5 0 0 0 20 407.5V453A1.5 1.5 0 0 0 21.5 454.5H54.5A1.5 1.5 0 0 0 56 453V444.5"/>
<rect x="27.5" y="411.2" width="21.6" height="3.2" fill="#FFD000" stroke-width="1.8"/>
<path d="M29.5 418.2H46.5M33 424H51.5M25.5 428.8H42.5M45.5 428.8H51.5M25.5 433.2H34M37 433.2H43" stroke-width="1.6"/>
<path d="M33.5 440.8A6 6 0 1 0 35.3 444.8" stroke-width="1.9"/>
<path d="M26.6 444.5L29 447.4L33 443" stroke-width="1.6"/>
<path d="M39.6 448.8C40.5 446.5 42 443 43 444.5C43.5 446.5 43.5 448 45 446.5C46 446 46.5 447 48 446.5L50 445.5" stroke-width="1.6"/>
<path d="M51.6 443.6L53.2 436.8L63.4 420.7C64 419.5 66.3 418.5 67.4 420.2C68 421.2 67.6 422.6 67 423.5L57 439.5Z" fill="#FFD000" stroke-width="1.9"/>
<path d="M51.8 443.4L55.2 440.3" stroke-width="1.6"/>
<path d="M58.5 427.2L61.8 429.3M54.8 433.3L58 435.4" stroke-width="1.5"/>
<path d="M66.7 425.4L67.3 426.7L63.8 434.2" stroke-width="1.6"/>
</g><g stroke="#111" stroke-width="2.2" stroke-linejoin="round" stroke-linecap="round">
<rect x="20.9" y="475.5" width="37.2" height="47.2" rx="3" fill="none"/>
<g fill="none" stroke="#111" stroke-width="1.9" stroke-linecap="butt" stroke-linejoin="miter"><path d="M27.6 480.4H32.6M30.1 480.4V487"/><path d="M38.6 480.4H35.1V486.1H38.6M35.1 483.3H38.2"/><path d="M44.2 481.2C43.6 480.5 42.9 480.3 42.2 480.3C41 480.3 40.3 481 40.3 481.9C40.3 484 44.4 483 44.4 485.2C44.4 486.2 43.6 486.9 42.3 486.9C41.4 486.9 40.7 486.6 40.1 486"/><path d="M45.6 480.4H50.6M48.1 480.4V487"/></g>
<rect x="27" y="492" width="4" height="4" fill="#FFD000" stroke-width="1.8"/>
<rect x="27" y="502" width="4" height="4" fill="#FFD000" stroke-width="1.8"/>
<rect x="27" y="511.7" width="4" height="4" fill="#FFD000" stroke-width="1.8"/>
<path d="M35 495.6H47.5M35 505.5H48.5M35 515.5H43.2" stroke-width="1.8"/>
<path d="M46.8 515.6L47.2 508.8L63.2 485.2C64.2 483.6 66.5 483.2 67.5 484.6C68.5 486 68.2 487.5 67.2 488.8L51.5 512.5Z" fill="#FFD000" stroke-width="2"/>
<path d="M47.2 508.8L51.5 512.5M61.5 487.8L65.6 490.5" fill="none" stroke-width="1.6"/>
</g><g stroke="#111" stroke-width="2" stroke-linejoin="round" stroke-linecap="round">
<path d="M52.53 570.09 L56.34 571.40 L56.34 576.20 L52.53 577.51 L51.52 580.30 L53.59 583.75 L50.51 587.43 L46.75 585.98 L44.18 587.47 L43.55 591.45 L38.82 592.28 L36.87 588.76 L33.95 588.24 L30.90 590.89 L26.75 588.49 L27.52 584.53 L25.61 582.26 L21.58 582.33 L19.94 577.82 L23.07 575.28 L23.07 572.32 L19.94 569.78 L21.58 565.27 L25.61 565.34 L27.52 563.07 L26.75 559.11 L30.90 556.71 L33.95 559.36 L36.87 558.84 L38.82 555.32 L43.55 556.15 L44.18 560.13 L46.75 561.62 L50.51 560.17 L53.59 563.85 L51.52 567.30Z" fill="#FBEB9C"/>
<path d="M44 565A7.6 7.6 0 1 0 45.3 573.5" fill="none"/>
<path d="M64.29 554.90 L67.53 555.65 L67.53 559.95 L64.29 560.70 L63.39 562.88 L65.14 565.70 L62.10 568.74 L59.28 566.99 L57.10 567.89 L56.35 571.13 L52.05 571.13 L51.30 567.89 L49.12 566.99 L46.30 568.74 L43.26 565.70 L45.01 562.88 L44.11 560.70 L40.87 559.95 L40.87 555.65 L44.11 554.90 L45.01 552.72 L43.26 549.90 L46.30 546.86 L49.12 548.61 L51.30 547.71 L52.05 544.47 L56.35 544.47 L57.10 547.71 L59.28 548.61 L62.10 546.86 L65.14 549.90 L63.39 552.72Z" fill="#FFD000" stroke="#FBEB9C" stroke-width="5"/>
<path d="M64.29 554.90 L67.53 555.65 L67.53 559.95 L64.29 560.70 L63.39 562.88 L65.14 565.70 L62.10 568.74 L59.28 566.99 L57.10 567.89 L56.35 571.13 L52.05 571.13 L51.30 567.89 L49.12 566.99 L46.30 568.74 L43.26 565.70 L45.01 562.88 L44.11 560.70 L40.87 559.95 L40.87 555.65 L44.11 554.90 L45.01 552.72 L43.26 549.90 L46.30 546.86 L49.12 548.61 L51.30 547.71 L52.05 544.47 L56.35 544.47 L57.10 547.71 L59.28 548.61 L62.10 546.86 L65.14 549.90 L63.39 552.72Z" fill="#FFD000"/>
<circle cx="54.2" cy="557.8" r="4.6" fill="#FBEB9C"/>
</g><g stroke="#111" stroke-width="2.1" stroke-linejoin="round" stroke-linecap="round" fill="none">
<path d="M51.5 621.6V617A4.5 4.5 0 0 0 47 612.5H28A4.5 4.5 0 0 0 23.5 617V649.8"/>
<path d="M27.2 619.4H51.3"/>
<path d="M23.5 653.8V656.5A4.5 4.5 0 0 0 28 661H47A4.5 4.5 0 0 0 51.5 656.5V647.6"/>
<path d="M23.8 653.8H46.5"/>
<path d="M42.2 625.8H62A2.8 2.8 0 0 1 64.8 628.6V641.3A2.8 2.8 0 0 1 62 644.1H50.5L44.6 649.3V644.1H42.2A2.8 2.8 0 0 1 39.4 641.3V628.6A2.8 2.8 0 0 1 42.2 625.8Z" fill="#FFD000"/>
<g fill="#111" stroke="none"><rect x="47" y="634" width="2" height="2"/><rect x="50.7" y="634" width="2" height="2"/><rect x="54.4" y="634" width="2" height="2"/></g>
</g><g stroke="#111" stroke-width="2.1" stroke-linejoin="round" stroke-linecap="round">
<path d="M43.7 699.4L67.5 691.2V719.2L43.7 728.2Z" fill="#FFD000"/>
<path d="M43.7 682.6L67.5 691.2L43.7 699.4L20.2 691.2Z" fill="#FBEB9C"/>
<path d="M20.2 691.2V719.2L43.7 728.2V699.4" fill="none"/>
<path d="M55.6 711.8L64 708.6M55.6 715.8L64 712.6M53.8 720.2L64 716.6" fill="none" stroke-width="1.8"/>
<circle cx="50.4" cy="722" r="0.9" fill="#111" stroke="none"/>
</g><g stroke="#111" stroke-width="2.1" stroke-linejoin="round" stroke-linecap="round">
<path d="M26 788.5C28 785 30.5 782 31 781.5C38 784 46 778 54.5 778.6L62.8 792C64.5 795 62.5 798 59.5 798H28.5C25.5 798 23.5 795 25.2 792Z" fill="#FFD000" stroke="none"/>
<path d="M38.6 755.5V767.6L25 791.6C23.6 794.5 25.5 798.1 28.7 798.1H59.3C62.5 798.1 64.4 794.5 63 791.6L49.4 767.6V755.5" fill="none"/>
<path d="M37.5 755H50.5A2.2 2.2 0 0 0 50.5 750.6H37.5A2.2 2.2 0 0 0 37.5 755Z" fill="#FBEB9C"/>
<path d="M31 781.6C38 784.5 45.5 778 54.6 778.6" fill="none"/>
<circle cx="40" cy="774.6" r="1.9" fill="#FFD000" stroke-width="1.5"/>
<circle cx="43.8" cy="767" r="0.9" fill="#111" stroke="none"/>
<circle cx="47.6" cy="773" r="0.9" fill="#111" stroke="none"/>
<path d="M36.2 792.4H55.8" stroke-width="1.9"/>
<circle cx="32.3" cy="792.4" r="0.9" fill="#111" stroke="none"/>
</g></svg>
</body></html>
